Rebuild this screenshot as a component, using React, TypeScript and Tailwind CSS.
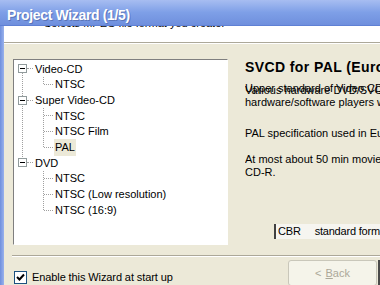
import React from "react";

const tree = [
  { label: "Video-CD", children: ["NTSC"] },
  { label: "Super Video-CD", children: ["NTSC", "NTSC Film", "PAL"] },
  { label: "DVD", children: ["NTSC", "NTSC (Low resolution)", "NTSC (16:9)"] },
];

const MinusBox = () => (
  <span className="relative z-10 flex h-[9px] w-[9px] items-center justify-center border border-[#919b9c] bg-white">
    <span className="h-px w-[5px] bg-black" />
  </span>
);

const TreeGroup = ({ label, children, last }) => (
  <div className="relative">
    {!last && (
      <div className="absolute left-[8px] top-[8px] h-full border-l border-dotted border-[#a0a0a0]" />
    )}
    <div className="flex h-[15.7px] items-center pl-[4px]">
      <MinusBox />
      <span className="w-[6px] border-t border-dotted border-[#a0a0a0]" />
      <span className="ml-[1px] px-[1px]">{label}</span>
    </div>
    <div className="relative">
      <div className="absolute left-[29px] top-0 h-[calc(100%-8px)] border-l border-dotted border-[#a0a0a0]" />
      {children.map((c) => (
        <div key={c} className="flex h-[15.7px] items-center pl-[30px]">
          <span className="w-[9px] border-t border-dotted border-[#a0a0a0]" />
          <span className={c === "PAL" && label === "Super Video-CD" ? "ml-[1px] bg-[#ece9d8] px-[1px]" : "ml-[1px] px-[1px]"}>
            {c}
          </span>
        </div>
      ))}
    </div>
  </div>
);

export default function App() {
  return (
    <div
      className="relative h-[285px] w-[380px] overflow-hidden bg-[#ece9d8] text-[11px] text-black"
      style={{ fontFamily: '"Liberation Sans", Arial, sans-serif' }}
    >
      {/* title bar */}
      <div className="h-[26px] border-b border-[#5f80d4] bg-gradient-to-b from-[#a7bdf1] via-[#7e9fe7] to-[#6f8fdd]">
        <div className="pl-[7px] pt-[7px] text-[14px] font-bold leading-[16px] tracking-[-0.35px] text-white [text-shadow:1px_1px_0_#5a74b8]">
          Project Wizard (1/5)
        </div>
      </div>

      <div className="flex h-[259px]">
        <div className="w-[4px] shrink-0 bg-gradient-to-r from-[#6f8fdd] to-[#9ab2ec]" />
        <div className="flex min-w-0 flex-1 flex-col">
          {/* header strip */}
          <div className="h-[16px] shrink-0 overflow-hidden bg-white">
            <div className="-mt-[9px] pl-[40px] leading-[13px]">Selects MPEG file format you create.</div>
          </div>
          <div className="h-px shrink-0 bg-[#aca899]" />
          <div className="h-px shrink-0 bg-white" />

          {/* body */}
          <div className="flex h-[211px] shrink-0 pt-[15px]">
            <div className="ml-[9px] h-[186px] w-[215px] shrink-0 border border-b-white border-l-[#7f7f7f] border-r-white border-t-[#7f7f7f] bg-white pt-[1px]">
              {tree.map((g, i) => (
                <TreeGroup key={g.label} label={g.label} children={g.children} last={i === tree.length - 1} />
              ))}
            </div>
            <div className="ml-[17px] min-w-0 flex-1 overflow-hidden whitespace-nowrap">
              <div className="text-[14px] font-bold leading-[17px] tracking-[0.4px]">SVCD for PAL (Europe)</div>
              <div className="relative mt-[8px] leading-[12px]">
                <div className="absolute -top-[2px] left-0">Upper standard of Video CD.</div>
                <div>Various hardware DVD/SVCD players and</div>
                <div>hardware/software players will play it.</div>
              </div>
              <div className="mt-[19px] leading-[12px]">PAL specification used in Europe.</div>
              <div className="mt-[14px] leading-[13px]">
                <div>At most about 50 min movie can be stored on a</div>
                <div>CD-R.</div>
              </div>
              <div className="ml-[29px] mt-[45px] flex h-[15px] items-center border-l-2 border-[#404040] bg-[#f6f5f0] pl-[2px] tracking-[-0.2px]">
                <span>CBR</span>
                <span className="ml-[14px]">standard format</span>
              </div>
            </div>
          </div>

          {/* bottom */}
          <div className="ml-[8px] h-px shrink-0 bg-[#aca899]" />
          <div className="ml-[8px] h-px shrink-0 bg-white" />
          <div className="flex flex-1 items-start">
            <div className="ml-[10px] mt-[12px] flex items-center">
              <span className="flex h-[13px] w-[13px] items-center justify-center border border-[#1c5180] bg-white">
                <svg width="9" height="9" viewBox="0 0 9 9">
                  <path d="M1 4 L3.5 6.5 L8 1.5" fill="none" stroke="#000" strokeWidth="2" />
                </svg>
              </span>
              <span className="ml-[5px] tracking-[-0.1px]">Enable this Wizard at start up</span>
            </div>
            <div className="ml-auto mr-[0px] mt-[3px] flex">
              <div className="flex h-[26px] w-[89px] items-center justify-center rounded-[3px] border border-[#c9c7ba] bg-[#f5f4ea] text-[#aca899]">
                &lt; <span className="ml-[4px] underline">B</span>ack
              </div>
              <div className="ml-[1px] h-[26px] w-[2px] bg-[#4a4a4a]" />
            </div>
          </div>
        </div>
      </div>
    </div>
  );
}
